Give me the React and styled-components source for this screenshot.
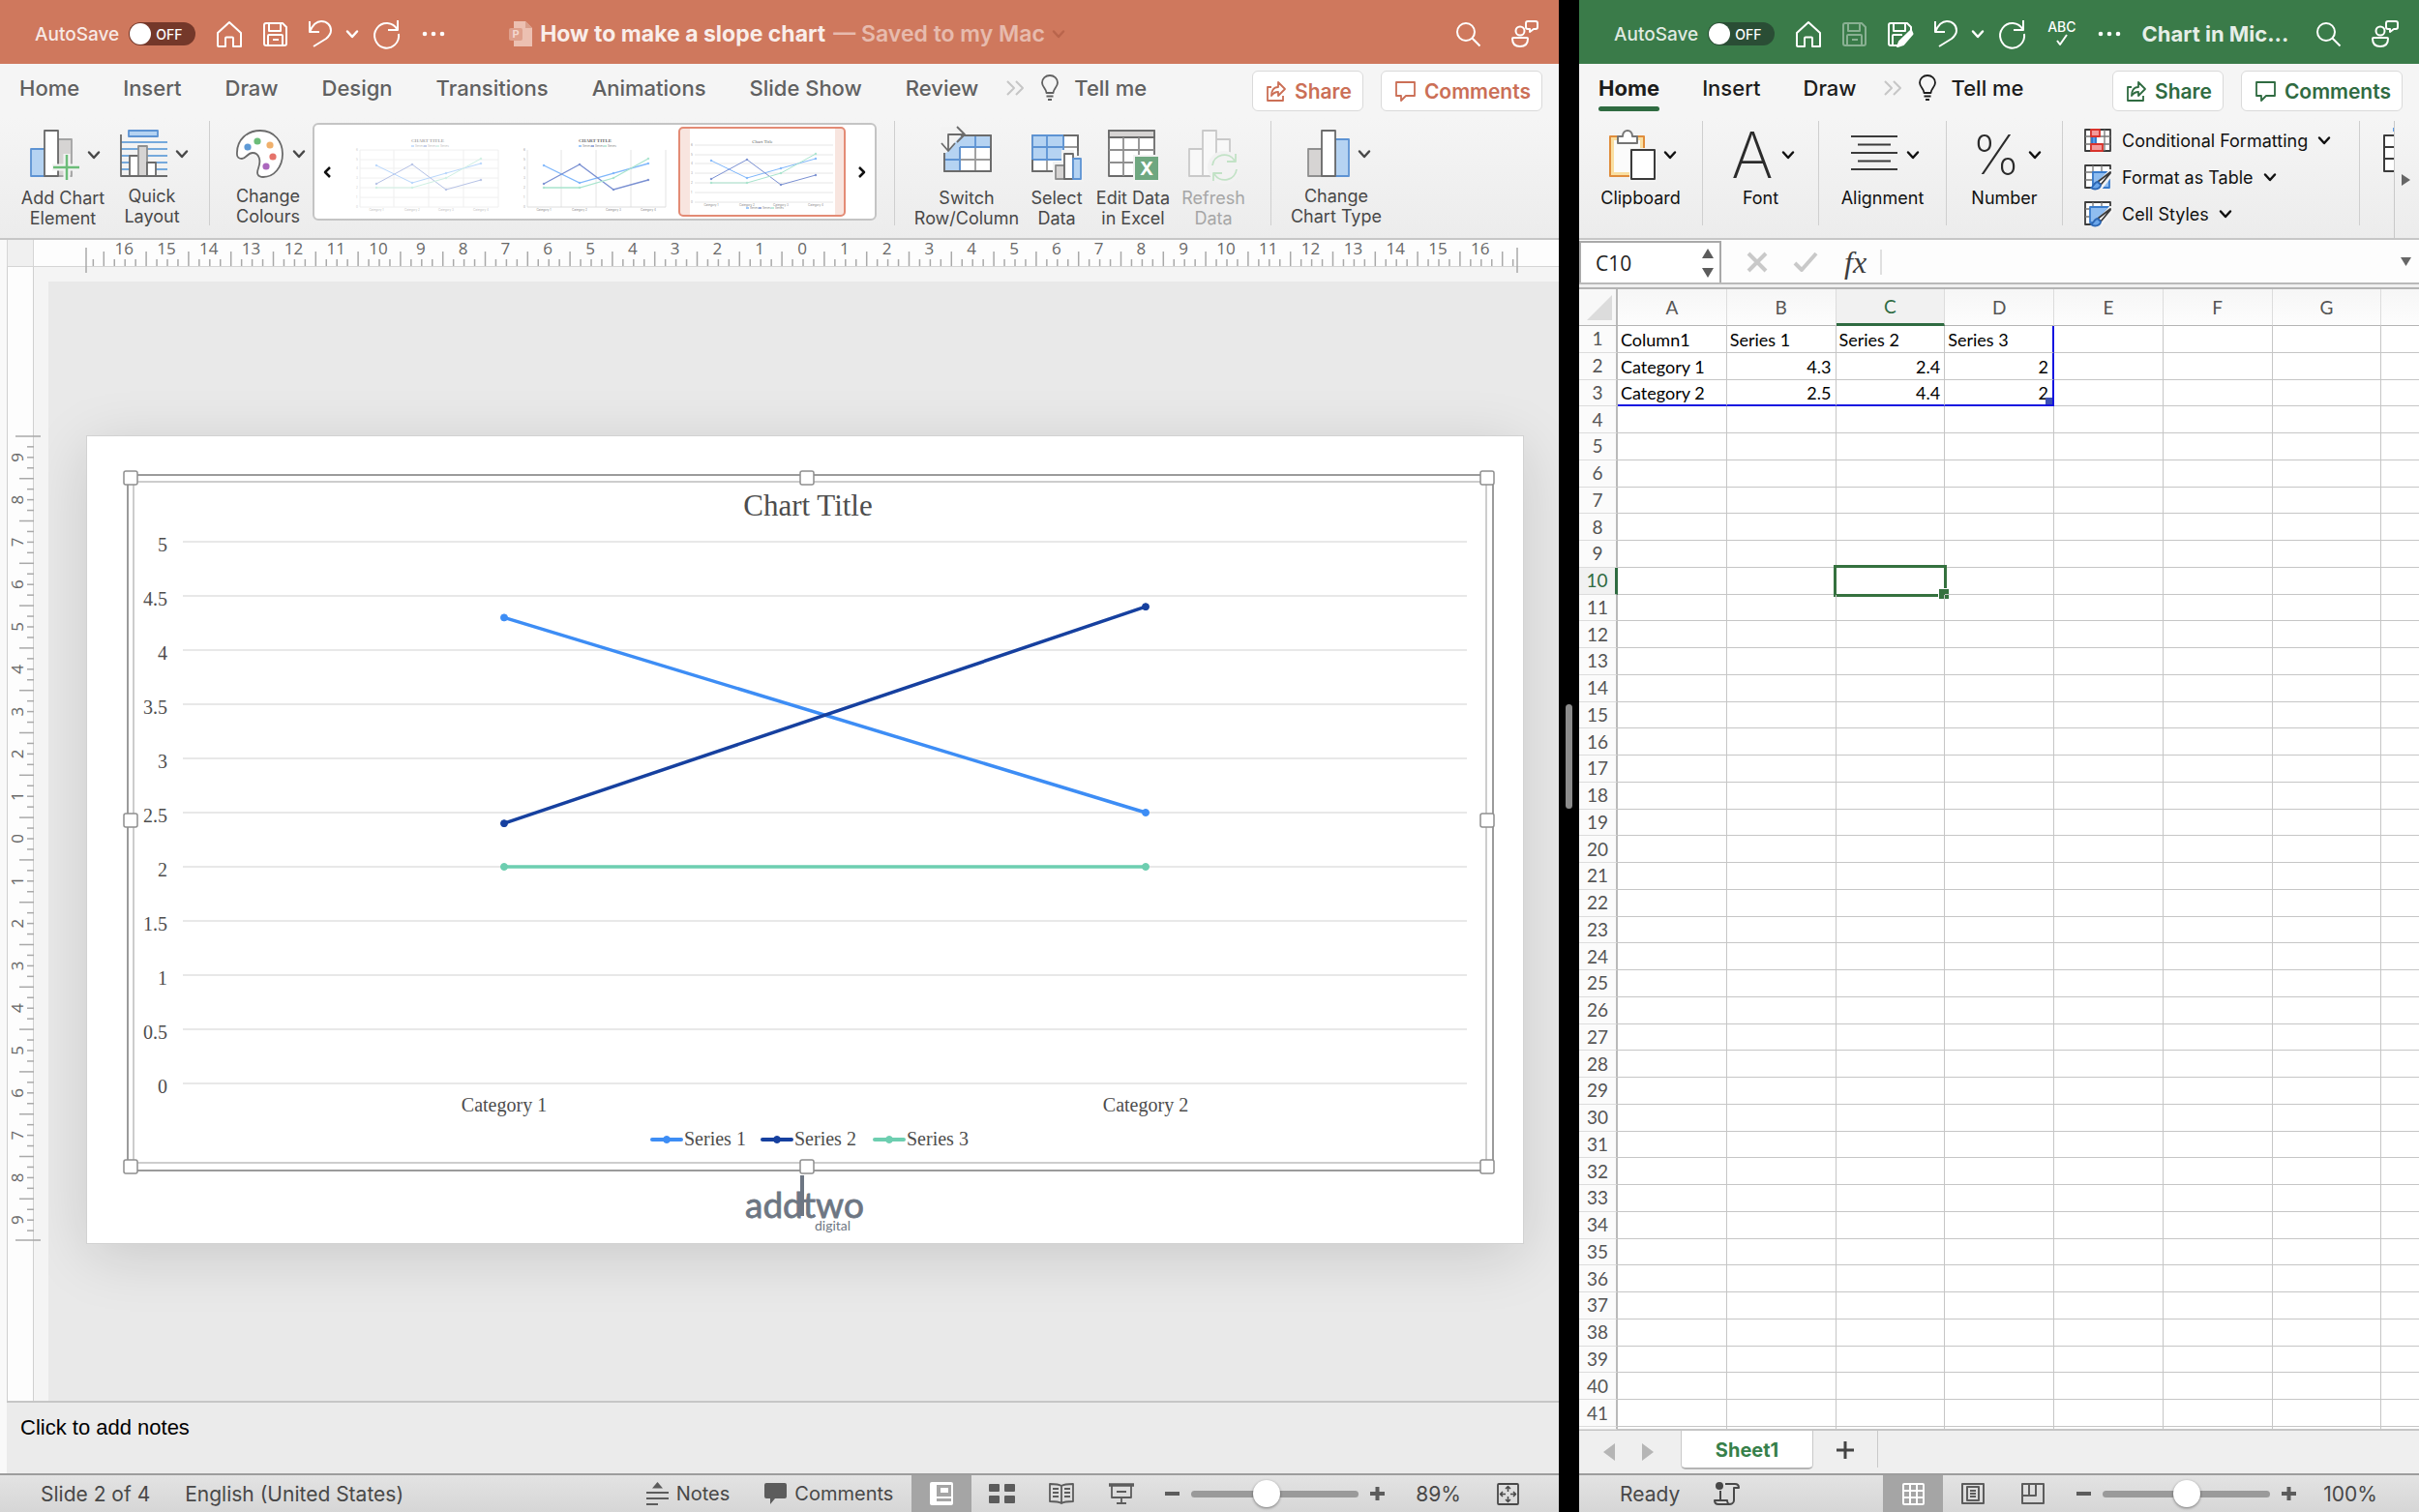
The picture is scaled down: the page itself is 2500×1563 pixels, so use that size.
import React from "react";
import styled, { createGlobalStyle, css } from "styled-components";

const GlobalStyle = createGlobalStyle`
  * {
    box-sizing: border-box;
  }
  body {
    margin: 0;
    font-family: Inter, "Liberation Sans", sans-serif;
    background: #000;
    overflow: hidden;
  }
  button, input, textarea {
    font-family: inherit;
    color: inherit;
    border: 0;
    margin: 0;
    padding: 0;
    background: none;
    outline: none;
  }
  svg {
    display: block;
    flex: none;
    overflow: visible;
  }
`;

const Desktop = styled.div`
  display: flex;
  height: 100vh;
  background: #000;
`;

const AppWindow = styled.section`
  flex: ${(p) => p.$grow} 1 0;
  min-width: 0;
  display: flex;
  flex-direction: column;
  background: #ebebeb;
  overflow: hidden;
`;

const Divider = styled.div`
  width: 21px;
  display: flex;
  align-items: center;
  justify-content: center;

  &::after {
    content: "";
    width: 7px;
    height: 108px;
    border-radius: 4px;
    background: #8b8b8b;
  }
`;

/* title bar */
const TitleBar = styled.header`
  height: 66px;
  flex: none;
  padding: 4px 21px 0 36px;
  display: grid;
  grid-template-columns: ${(p) => p.$columns};
  align-items: center;
  color: #fff;
  background: ${(p) => p.$color};
`;

const Tools = styled.div`
  display: flex;
  align-items: center;
  gap: ${(p) => p.$gap || 22}px;
  justify-content: ${(p) => (p.$end ? "flex-end" : "flex-start")};
`;

const ToolButton = styled.button`
  display: flex;
  align-items: center;
  color: #fff;
  opacity: ${(p) => (p.$dim ? 0.4 : 1)};
`;

const SpellButton = styled(ToolButton)`
  flex-direction: column;
  padding-bottom: 2px;
  font-size: 14px;
  font-weight: 500;
  line-height: 14px;
`;

const AutoSave = styled.label`
  display: flex;
  align-items: center;
  gap: 10px;
  font-size: 19px;
  font-weight: 500;
  color: rgba(255, 255, 255, 0.85);

  input {
    appearance: none;
    position: absolute;
  }
`;

const Switch = styled.span`
  width: 69px;
  height: 24px;
  border-radius: 12px;
  display: flex;
  align-items: center;
  gap: 5px;
  padding-left: 1px;
  font-size: 14px;
  font-weight: 500;
  color: #fff;
  background: ${(p) => p.$color};

  &::before {
    content: "";
    width: 22px;
    height: 22px;
    border-radius: 50%;
    background: #fff;
  }
`;

const DocTitle = styled.h1`
  margin: 0;
  display: flex;
  align-items: center;
  gap: 8px;
  font-size: ${(p) => p.$size}px;
  font-weight: 700;
  white-space: nowrap;
  color: rgba(255, 255, 255, 0.88);

  span {
    color: rgba(255, 255, 255, 0.5);
    font-weight: 600;
  }
`;

const TitleMenu = styled.button`
  color: #b9654c;
`;

/* ribbon */
const TabRow = styled.nav`
  height: 55px;
  flex: none;
  display: flex;
  align-items: flex-start;
  padding: 0 17px 0 20px;
  background: #f5f5f5;
`;

const Tabs = styled.div`
  display: flex;
  flex: 1;
  gap: ${(p) => p.$gap}px;
`;

const Tab = styled.button`
  position: relative;
  height: 49px;
  display: flex;
  align-items: center;
  gap: 16px;
  font-size: 22px;
  white-space: nowrap;
  color: ${(p) => p.$color};
  font-weight: ${(p) => (p.$active ? 700 : 500)};

  ${(p) =>
    p.$active &&
    css`
      &::after {
        content: "";
        position: absolute;
        left: 0;
        right: 0;
        bottom: 0;
        height: 5px;
        border-radius: 3px;
        background: #2f6b41;
      }
    `}
`;

const TabTail = styled.div`
  display: flex;
  align-items: center;
  gap: 16px;
  margin-left: -17px;
`;

const PillButton = styled.button`
  margin: 7px 0 0 18px;
  height: 42px;
  padding: 0 11px 0 14px;
  display: flex;
  align-items: center;
  gap: 9px;
  font-size: 21px;
  font-weight: 600;
  color: ${(p) => p.$color};
  background: #fff;
  border: 1px solid #dadada;
  border-radius: 6px;
`;

const Ribbon = styled.div`
  height: 127px;
  flex: none;
  display: flex;
  padding: 4px 0 0 ${(p) => p.$pad}px;
  background: linear-gradient(#f5f5f5, #ececec);
  border-bottom: 2px solid #c6c6c6;
`;

const Separator = styled.i`
  width: 1px;
  height: 108px;
  flex: none;
  margin: 0 ${(p) => p.$space || 0}px;
  background: #cfcfcf;
`;

const RibbonButton = styled.button`
  width: ${(p) => p.$width}px;
  flex: none;
  height: 108px;
  padding-top: 9px;
  display: flex;
  flex-direction: column;
  align-items: center;
  gap: 8px;
  font-size: 18px;
  line-height: 21px;
  color: ${(p) => p.$color || "#484848"};
`;

const IconLine = styled.span`
  height: 52px;
  display: flex;
  align-items: center;
  gap: 9px;
  padding-left: ${(p) => (p.$menu ? 4 : 0)}px;
`;

const ThinGlyph = styled.span`
  font-family: Inter, Lato, sans-serif;
  font-size: ${(p) => p.$size}px;
  font-weight: 200;
  line-height: 50px;
  color: #2b2b2b;
`;

const Gallery = styled.div`
  margin-left: 6px;
  width: 583px;
  height: 101px;
  flex: none;
  margin-top: 2px;
  display: flex;
  align-items: center;
  justify-content: space-between;
  padding: 0 9px;
  background: #fff;
  border: 2px solid #c4c4c4;
  border-radius: 6px;
  color: #111;
`;

const Thumbs = styled.div`
  display: flex;
`;

const Thumb = styled.button`
  width: 173px;
  height: 93px;
  display: flex;
  justify-content: center;
  border: 2px solid ${(p) => (p.$selected ? "#e38b75" : "transparent")};
  border-radius: 5px;
  background: ${(p) => (p.$selected ? "#f8e5df" : "#fff")};
`;

const FormatList = styled.div`
  flex: 1;
  padding-left: 22px;
  display: flex;
  flex-direction: column;
  gap: 12px;
  padding-top: 7px;
`;

const FormatButton = styled.button`
  display: flex;
  align-items: center;
  gap: 11px;
  height: 26px;
  font-size: 18px;
  white-space: nowrap;
  color: #111;
`;

const CutGroup = styled.div`
  width: 36px;
  padding: 8px 0 0 24px;
  overflow: hidden;
  border-right: 1px solid #c8c8c8;
`;

const RibbonScroll = styled.button`
  width: 25px;
  display: flex;
  align-items: center;
  justify-content: center;
  padding-right: 3px;
  color: #666;
`;

/* slide editor */
const Editor = styled.div`
  flex: 1;
  min-height: 0;
  display: grid;
  grid-template-columns: 28px 1fr;
  grid-template-rows: 28px 1fr 75px;
  border-left: 7px solid #f9f9f9;
  box-shadow: inset 1px 0 #c8c8c8;
`;

const RulerCorner = styled.div`
  background: #f0f0f0;
  border: 1px solid #d5d5d5;
  border-width: 0 1px 1px 1px;
`;

const HorizontalRuler = styled.div`
  background: #fdfdfd;
  border-bottom: 1px solid #d5d5d5;
  overflow: visible;
  position: relative;
  z-index: 1;
`;

const VerticalRuler = styled.div`
  background: #fdfdfd;
  border: 1px solid #d0d0d0;
  border-width: 0 1px;
  position: relative;
  z-index: 1;
`;

const Stage = styled.main`
  display: flex;
  align-items: center;
  padding: 0 37px 3px 40px;
  border: 15px solid #f4f4f4;
  border-width: 15px 0 0 15px;
  background: #e9e9e9;
  overflow: hidden;
  min-height: 0;
`;

const Slide = styled.div`
  width: 100%;
  background: #fff;
  outline: 1px solid #d2d2d2;
  box-shadow: 0 12px 60px rgba(0, 0, 0, 0.14);
`;

const NotesBox = styled.textarea`
  grid-column: 1 / -1;
  height: 100%;
  width: 100%;
  resize: none;
  padding: 13px 14px;
  font-family: "Liberation Sans", Arial, sans-serif;
  font-size: 22px;
  line-height: 26px;
  background: #ebebeb;
  border-top: 2px solid #c6c6c6;

  &::placeholder {
    color: #000;
  }
`;

/* status bars */
const StatusBar = styled.footer`
  height: 40px;
  flex: none;
  display: flex;
  align-items: center;
  padding: 0 ${(p) => p.$right}px 0 42px;
  font-size: 21px;
  color: #484848;
  background: linear-gradient(#e3e3e3, #d6d6d6);
  border-top: 2px solid #9d9d9d;
`;

const StatusText = styled.span`
  margin-right: ${(p) => p.$space || 0}px;
  white-space: nowrap;
`;

const StatusButton = styled.button`
  display: flex;
  align-items: center;
  gap: 8px;
  font-size: 20px;
  margin-right: ${(p) => p.$space || 0}px;
`;

const Spacer = styled.div`
  flex: 1;
`;

const ViewButton = styled.button`
  width: 62px;
  height: 38px;
  flex: none;
  display: flex;
  align-items: center;
  justify-content: center;
  color: ${(p) => (p.$active ? "#fff" : "#5c5c5c")};
  background: ${(p) => (p.$active ? "#a5a5a5" : "none")};
`;

const ZoomControl = styled.div`
  display: flex;
  align-items: center;
  gap: 12px;
  margin: 0 ${(p) => p.$after}px 0 14px;
`;

const ZoomSlider = styled.input`
  appearance: none;
  width: 173px;
  height: 28px;

  &::-webkit-slider-runnable-track {
    height: 7px;
    border-radius: 4px;
    background: #9a9a9a;
  }
  &::-webkit-slider-thumb {
    appearance: none;
    width: 28px;
    height: 28px;
    margin-top: -11px;
    border-radius: 50%;
    background: #fff;
    box-shadow: 0 1px 3px rgba(0, 0, 0, 0.45);
  }
`;

/* spreadsheet */
const FormulaBar = styled.div`
  height: 51px;
  flex: none;
  display: flex;
  align-items: center;
  padding-bottom: 4px;
  background: #fdfdfd;
  border-bottom: 2px solid #b4b4b4;
  box-shadow: inset 0 -3px #f0f0f0, inset 0 -5px #b9b9b9;
`;

const NameBox = styled.div`
  width: 147px;
  height: 43px;
  display: flex;
  align-items: center;
  border: 2px solid #a9a9a9;
  border-bottom: 0;
  padding: 0 6px 0 15px;
  background: #fff;

  input {
    flex: 1;
    min-width: 0;
    font-family: "Open Sans", sans-serif;
    font-size: 21px;
    color: #222;
  }
`;

const Stepper = styled.div`
  display: flex;
  flex-direction: column;
  gap: 10px;
  color: #5c5c5c;

  button {
    display: block;
  }
`;

const FormulaTools = styled.div`
  display: flex;
  align-items: center;
  gap: 28px;
  margin-left: 27px;
  padding-right: 14px;
  border-right: 2px solid #e0e0e0;
  color: #c9c9c9;
`;

const FunctionButton = styled.button`
  font-family: "Liberation Serif", serif;
  font-size: 32px;
  line-height: 26px;
  font-style: italic;
  color: #3d3d3d;
`;

const FormulaInput = styled.input`
  flex: 1;
  min-width: 0;
  height: 34px;
`;

const SheetArea = styled.div`
  flex: 1;
  min-height: 0;
  background: #fff;
  overflow: hidden;
`;

const Sheet = styled.table`
  width: 942px;
  height: 100%;
  table-layout: fixed;
  border-collapse: separate;
  border-spacing: 0;
  font-family: Lato, "Open Sans", sans-serif;
  font-size: 18px;
`;

const Row = styled.tr`
  ${(p) => p.$height && `height: ${p.$height}px;`}
`;

const ColumnHead = styled.th`
  padding: 0;
  font-size: 19px;
  font-weight: 400;
  line-height: 20px;
  color: ${(p) => (p.$active ? "#2f6b41" : "#555")};
  background: ${(p) => (p.$active ? "#f1f1f1" : "linear-gradient(#f6f6f6, #fdfdfd)")};
  border-right: 1px solid #dcdcdc;
  border-bottom: ${(p) => (p.$active ? "3px solid #2f6b41" : "1px solid #b5b5b5")};
`;

const CornerHead = styled.th`
  width: 40px;
  padding: 4px 3px 3px 8px;
  background: #f8f8f8;
  border-right: 2px solid #b9b9b9;
  border-bottom: 1px solid #b5b5b5;
`;

const RowHead = styled.th`
  padding: 0;
  font-size: 19px;
  font-weight: 400;
  line-height: 20px;
  color: ${(p) => (p.$active ? "#2f6b41" : "#555")};
  background: ${(p) => (p.$active ? "#f1f1f1" : "#fbfbfb")};
  border-right: ${(p) => (p.$active ? "3px solid #2f6b41" : "2px solid #b9b9b9")};
  border-bottom: 1px solid #dcdcdc;
`;

/* cells stay shorter than the row head, so every row gets the same height */
const Cell = styled.td`
  position: relative;
  padding: 1px 4px 0 3px;
  line-height: 18px;
  white-space: nowrap;
  color: #000;
  text-align: ${(p) => (p.$number ? "right" : "left")};
  border-right: ${(p) => (p.$blueRight ? "2px solid #1515e0" : "1px solid #c6c6c6")};
  border-bottom: ${(p) => (p.$blueBottom ? "2px solid #1515e0" : "1px solid #c6c6c6")};
`;

const RangeHandle = styled.i`
  position: absolute;
  right: 0;
  bottom: 0;
  width: 7px;
  height: 7px;
  background: #3b4fb5;
`;

const Selection = styled.div`
  position: absolute;
  inset: -3px;
  border: 3px solid #35713f;

  &::after {
    content: "";
    position: absolute;
    right: -6px;
    bottom: -6px;
    width: 10px;
    height: 10px;
    background: #35713f;
    border: 1px solid #fff;
  }
`;

const SheetTabs = styled.div`
  height: 45px;
  flex: none;
  display: flex;
  align-items: flex-start;
  background: #efefef;
  border-top: 1px solid #c4c4c4;
  color: #b5b5b5;
  padding-left: 25px;
`;

const SheetNav = styled.button`
  height: 44px;
  width: 40px;
`;

const SheetTab = styled.button`
  width: 137px;
  height: 40px;
  padding-top: 2px;
  font-size: 20px;
  font-weight: 700;
  color: #36804a;
  background: #fff;
  border: 1px solid #c9c9c9;
  border-top: 0;
  border-bottom: 2px solid #b5b5b5;
  border-radius: 0 0 5px 5px;
`;

const AddSheet = styled.button`
  width: 67px;
  height: 38px;
  display: flex;
  align-items: center;
  justify-content: center;
  padding: 2px 0 0 0;
  color: #444;
  border-right: 1px solid #c9c9c9;
`;

/* icons */
const Icon = ({ w, h, children, stroke = "currentColor", sw = 2, fill = "none" }) => (
  <svg
    width={w}
    height={h}
    viewBox={`0 0 ${w} ${h}`}
    fill={fill}
    stroke={stroke}
    strokeWidth={sw}
    strokeLinejoin="round"
    aria-hidden="true"
  >
    {children}
  </svg>
);

const Chevron = () => (
  <Icon w={12} h={9} sw={2.5}>
    <path d="M1 1.5 6 7l5-5.5" strokeLinecap="round" />
  </Icon>
);

const HomeIcon = () => (
  <Icon w={26} h={27}>
    <path d="M1 12 13 1l12 11v14h-8V17.500q0-1-1-1h-6q-1 0-1 1V26H2q-1 0-1-1z" />
  </Icon>
);

const SaveIcon = () => (
  <Icon w={25} h={25}>
    <path d="M3 1h17l4 4v17q0 2-2 2H3q-2 0-2-2V3q0-2 2-2z" />
    <path d="M6 1v8h12V1M5 24V14q0-1 1-1h13q1 0 1 1v10M10 18h6" />
  </Icon>
);

const SaveEditIcon = () => (
  <Icon w={26} h={25}>
    <path d="M10 24H3q-2 0-2-2V3q0-2 2-2h17l4 4v3" />
    <path d="M6 1v8h12V1M5 24V14q0-1 1-1h9" />
    <path d="M24 8.500 12 20l-2 5 6-2 9.500-11z" fill="#fff" />
  </Icon>
);

const UndoIcon = () => (
  <Icon w={24} h={28}>
    <path d="M1 1v11h10M1 12C4 5 8 1 13 1c6 0 10 4 10 9.500 0 4-2 6-5 8.500L5 27" />
  </Icon>
);

const RedoIcon = () => (
  <Icon w={29} h={28}>
    <path d="M26 0v10H16M25.500 9.500A12.500 12.800 0 1 0 27 14" />
  </Icon>
);

const MoreIcon = () => (
  <Icon w={24} h={6} fill="currentColor" stroke="none">
    <circle cx="3" cy="3" r="2.300" />
    <circle cx="12" cy="3" r="2.300" />
    <circle cx="21" cy="3" r="2.300" />
  </Icon>
);

const SearchIcon = () => (
  <Icon w={25} h={25}>
    <circle cx="10" cy="10" r="9" />
    <path d="m16.500 16.500 8 8" />
  </Icon>
);

const PersonIcon = () => (
  <Icon w={28} h={28}>
    <circle cx="9" cy="11" r="4.500" />
    <path d="M2 18h14q1 0 1 1c0 5-3 8-8 8s-8-3-8-8q0-1 1-1z" />
    <path d="M17 1h8q2 0 2 2v4q0 2-2 2h-2l-4 3V9h-2q-2 0-2-2V3q0-2 2-2z" />
  </Icon>
);

const DocIcon = () => (
  <Icon w={24} h={26} stroke="none">
    <path d="M5 0h12l7 7v19H5z" fill="#ecc0b1" />
    <path d="M17 0v7h7z" fill="#d99f8b" />
    <rect y="7" width="14" height="13" rx="2" fill="#dfa08c" />
    <text x="7" y="17" fontSize="11" fontWeight="700" textAnchor="middle" fill="#f3d8ce">
      P
    </text>
  </Icon>
);

const CheckMark = () => (
  <Icon w={14} h={13}>
    <path d="m2 7 3 4 7-10" />
  </Icon>
);

const BulbIcon = () => (
  <Icon w={18} h={27} sw={1.800}>
    <path d="M5.500 19C5.500 15 1 13 1 8.500a8 7.500 0 0 1 16 0C17 13 12.500 15 12.500 19zM5.500 22.500h7M7 26h4" />
  </Icon>
);

const OverflowIcon = () => (
  <Icon w={21} h={16} stroke="#c6c6c6">
    <path d="m2 1 7 7-7 7M11 1l7 7-7 7" />
  </Icon>
);

const ShareIcon = () => (
  <Icon w={20} h={22} sw={1.800}>
    <path d="M5 7H1v14h16v-5" />
    <path d="M12 2v5c-5 0-7 4-7 9 2-3 4-4 7-4v4l7-7z" />
  </Icon>
);

const CommentIcon = () => (
  <Icon w={21} h={21} sw={1.800}>
    <path d="M1 1h19v14h-9l-5 5v-5H1z" />
  </Icon>
);

const AddElementIcon = () => (
  <Icon w={51} h={52} stroke="#6b6b6b" sw={1.800}>
    <rect x="29" y="10" width="14" height="38" fill="#d6d4d3" stroke="#a3a3a3" />
    <rect x="1" y="20" width="14" height="28" fill="#b5d3f2" stroke="#5d93d3" />
    <rect x="15" y="1" width="14" height="47" fill="#fff" />
    <path d="M38 25v27M23 39h28" stroke="#f3f3f3" strokeWidth="7" />
    <path d="M38 26v26M24 39h27" stroke="#6cbd79" strokeWidth="2.500" />
  </Icon>
);

const LayoutIcon = () => (
  <Icon w={49} h={50} stroke="#6b6b6b" sw={1.800}>
    <rect x="9" y="1" width="30" height="6" fill="#b5d3f2" stroke="#5d93d3" />
    <path d="M1 13h48M1 20h48M1 27h48M1 34h48M1 41h48" stroke="#75a9dc" />
    <rect x="10" y="27" width="9" height="21" fill="#fff" />
    <rect x="19" y="17" width="9" height="31" fill="#d6d4d3" stroke="#8f8f8f" />
    <rect x="28" y="34" width="9" height="14" fill="#fff" />
    <path d="M1 5v43h48" />
  </Icon>
);

const PaletteIcon = () => (
  <Icon w={50} h={50} stroke="none">
    <path
      d="M1 26C0 10 12 1 25 1c15 0 23 12 23 24 0 14-9 24-20 24-6 0-7-4-5-9 3-8 1-16-6-16-5 0-7 6-11 6-3 0-5-2-5-4z"
      fill="#fff"
      stroke="#6b6b6b"
      strokeWidth="1.800"
    />
    <circle cx="12" cy="18" r="3.600" fill="#5e9ad6" />
    <circle cx="22" cy="12" r="3.600" fill="#6cbd79" />
    <circle cx="35" cy="16" r="3.600" fill="#f0b06c" />
    <circle cx="38" cy="28" r="3.600" fill="#e5736b" />
    <circle cx="31" cy="38" r="3.600" fill="#ab67bd" />
  </Icon>
);

const SwitchIcon = () => (
  <Icon w={52} h={52} stroke="#6b6b6b" sw={1.800}>
    <rect x="3" y="6" width="48" height="37" fill="#fff" />
    <path d="M3 6h48v12H19v25H3z" fill="#b5d3f2" stroke="none" />
    <path d="M19 18v25M35 18v25M19 31h32" stroke="#9a9a9a" />
    <path d="M35 6v12M3 31h16M19 18v25M19 18h32" stroke="#5d93d3" />
    <path d="M3 6h48v37H3z" />
    <path d="M-1-3h29L5 24H-1z" fill="#f3f3f3" stroke="none" />
    <path d="M7 21V5h16M0 14l7 8 7-8M16-3l8 8-8 8" />
  </Icon>
);

const SelectIcon = () => (
  <Icon w={52} h={52} stroke="#6b6b6b" sw={1.800}>
    <rect x="1" y="6" width="47" height="37" fill="#fff" />
    <path d="M1 31h47M1 18h47M16 6v37M33 6v37" stroke="#9a9a9a" />
    <rect x="1" y="6" width="32" height="25" fill="#b5d3f2" stroke="#5d93d3" />
    <path d="M1 18h32M16 6v25" stroke="#5d93d3" />
    <path d="M33 6h15v16M1 31v12h22" />
    <path d="M22 33h9V21h13v6h10v27H22z" fill="#f2f2f2" stroke="none" />
    <rect x="25" y="37" width="9" height="14" fill="#d6d4d3" stroke="#8f8f8f" />
    <rect x="34" y="25" width="9" height="26" fill="#fff" />
    <rect x="43" y="30" width="8" height="21" fill="#b5d3f2" stroke="#5d93d3" />
  </Icon>
);

const EditDataIcon = () => (
  <Icon w={52} h={52} stroke="#6b6b6b" sw={1.800}>
    <rect x="1" y="1" width="47" height="47" fill="#fff" />
    <rect x="1" y="1" width="47" height="7" fill="#d6d4d3" />
    <path d="M16 8v40M32 8v40M1 21h47M1 34h47" stroke="#8f8f8f" />
    <path d="M26 26h28v28H26z" fill="#f2f2f2" stroke="none" />
    <rect x="28" y="28" width="24" height="24" fill="#6fa780" stroke="none" />
    <text x="40" y="47" fontSize="19" fontWeight="700" textAnchor="middle" fill="#fff" stroke="none">
      X
    </text>
  </Icon>
);

const RefreshIcon = () => (
  <Icon w={52} h={52} stroke="#c9c9c9" sw={1.800}>
    <path d="M1 20h14v28H1zM15 1h14v47H15zM29 10h14v38H29z" fill="#f8f8f8" />
    <circle cx="37" cy="39" r="17" fill="#f2f2f2" stroke="none" />
    <path d="M25 37a12.500 12.500 0 0 1 23-5M49 25v8h-9M50 41a12.500 12.500 0 0 1-23 5M26 53v-8h9" stroke="#c2e2c6" />
  </Icon>
);

const ChartTypeIcon = () => (
  <Icon w={44} h={50} stroke="#6b6b6b" sw={1.800}>
    <rect x="1" y="20" width="14" height="28" fill="#d6d4d3" stroke="#8f8f8f" />
    <rect x="29" y="10" width="14" height="38" fill="#b5d3f2" stroke="#5d93d3" />
    <rect x="15" y="1" width="14" height="47" fill="#fff" />
  </Icon>
);

const ClipboardIcon = () => (
  <Icon w={48} h={52} stroke="#3b3b3b">
    <rect x="1" y="7" width="35" height="41" fill="#f9dfa2" stroke="#e08d3c" />
    <rect x="5" y="11" width="27" height="33" fill="#fbfbfb" stroke="none" />
    <path d="M9 14V7h5c0-8 10-8 10 0h5v7z" fill="#fff" stroke="#757575" />
    <path d="M21 19h28v35H21z" fill="#f3f3f3" stroke="none" />
    <rect x="23" y="21" width="24" height="30" fill="#fff" />
  </Icon>
);

const AlignIcon = () => (
  <Icon w={50} h={40} stroke="#3b3b3b">
    <path d="M1 1h48M8 9.500h34M1 18h48M8 26.500h34M1 35h48" />
  </Icon>
);

const ConditionalIcon = () => (
  <Icon w={28} h={24} stroke="#3b3b3b" sw={1.800}>
    <path d="M1 1h26v22H1z" fill="#fff" />
    <path d="M7 1v22M21 1v22M1 8h26M1 16h26" stroke="#777" strokeWidth="1.300" />
    <path d="M8 8h4v8H8z" fill="#5b9ce8" stroke="#2f75c9" />
    <path d="M7 1h9v7H7zM7 16h12v7H7z" fill="#f39a9a" stroke="#d9332c" />
  </Icon>
);

const TableStyleIcon = ({ full }) => (
  <Icon w={28} h={26} stroke="#3b3b3b" sw={1.800}>
    <path d="M27 8V1H1v23h6" fill="#fff" />
    <path d="M9 1v22M18 1v8M1 8h26M1 16h10" stroke="#777" strokeWidth="1.300" />
    <path d={full ? "M6 6h20L12 22H6z" : "M9 8h17v16H9z"} fill="#8fbdf0" stroke="#3a7ccc" />
    <path d="M27 7 14 21l3 3 11-14z" fill="#fff" stroke="#f2f2f2" strokeWidth="4" />
    <path d="M27 8 14 18l3 3 10-12z" fill="#fff" />
    <path d="M14 18c-4 0-4 5-7 6 4 3 10 1 10-3z" fill="#6ba6ea" stroke="#2d68b5" />
  </Icon>
);

const CutTableIcon = () => (
  <Icon w={30} h={50} stroke="#3b3b3b">
    <path d="M1 7h36v37H1zM1 19h36M1 31h36" fill="#fff" />
    <path d="M11-1v4" stroke="#5b9ce8" />
  </Icon>
);

const Triangle = ({ d, w = 12, h = 10 }) => (
  <Icon w={w} h={h} stroke="none" fill="currentColor">
    <path d={d} />
  </Icon>
);

const MinusPlus = ({ plus }) => (
  <Icon w={15} h={14} sw={4} stroke="#5c5c5c">
    <path d={plus ? "M0 7h15M7.500 0v14" : "M0 7h15"} />
  </Icon>
);

/* gallery thumbnails */
const thumbX = [22, 59, 94, 130];
const thumbSeries = [
  { color: "#7fb7fb", y: [33, 51, 41, 31] },
  { color: "#7a90d2", y: [52, 32, 58, 48] },
  { color: "#a8e4cd", y: [56, 56, 46, 26] },
];

const ThumbChart = ({ variant }) => {
  const shift = variant === 2 ? 0 : 5;
  return (
    <svg width="150" height="89" viewBox="0 0 150 89" opacity={variant === 0 ? 0.55 : 1}>
      <rect width="150" height="89" fill="#fff" />
      {[17, 27, 36, 46, 56, 66, 76].map((y, i) => (
        <g key={y}>
          {variant !== 1 && <path d={`M5 ${y + shift}h143`} stroke="#e6e6e6" strokeWidth="1" />}
          <text x="1" y={y + shift + 1} fontSize="3" fill="#999">
            {6 - i}
          </text>
        </g>
      ))}
      {variant !== 2 &&
        [5, 40, 76, 112, 148].map((x) => (
          <path key={x} d={`M${x} 22v59`} stroke="#e4e4e4" strokeWidth="1" />
        ))}
      {variant === 1 && <path d="M5 81h143" stroke="#ddd" strokeWidth="1" />}
      <text
        x="75"
        y={variant === 2 ? 15 : 14}
        fontSize="5"
        textAnchor="middle"
        fill="#666"
        fontFamily="Liberation Serif, serif"
        fontWeight={variant === 2 ? 400 : 700}
      >
        {variant === 2 ? "Chart Title" : "CHART TITLE"}
      </text>
      {thumbSeries.map((s, i) => (
        <g key={s.color} stroke={s.color} fill={s.color}>
          <polyline
            points={s.y.map((y, n) => `${thumbX[n]},${y + shift}`).join(" ")}
            fill="none"
            strokeWidth={variant === 1 ? 1.3 : 1}
          />
          {s.y.map((y, n) => (
            <circle key={n} cx={thumbX[n]} cy={y + shift} r="0.800" />
          ))}
          <path d={`M${58 + i * 13} ${variant === 2 ? 82 : 18}h3`} strokeWidth="1.500" />
          <text
            x={62 + i * 13}
            y={variant === 2 ? 83 : 19}
            fontSize="3"
            fill="#888"
            stroke="none"
          >
            Series
          </text>
        </g>
      ))}
      {thumbX.map((x, i) => (
        <text key={x} x={x} y={shift + 80} fontSize="3" textAnchor="middle" fill="#888">
          Category {i + 1}
        </text>
      ))}
    </svg>
  );
};

/* rulers, one unit is 43.8px */
const UNIT = 43.8;

const RulerMarks = ({ half, start, end, center, vertical }) => {
  const line = (pos, from, to, key) =>
    vertical ? (
      <path key={key} d={`M${from} ${pos}H${to}`} />
    ) : (
      <path key={key} d={`M${pos} ${from}V${to}`} />
    );
  const ticks = [];
  for (let i = -half * 4 - 3; i <= half * 4 + 3; i++) {
    const pos = center + (i * UNIT) / 4;
    const major = Math.abs(i) % 4 === 2;
    if (pos > start + 3 && pos < end - 3) ticks.push(line(pos, major ? 12 : 20, 27, i));
  }
  const labels = [];
  for (let i = -half; i <= half; i++) labels.push(i);
  return (
    <g>
      <g stroke="#a9a9a9" strokeWidth="1.500">
        {ticks}
        {line(start, 8, 34, "start")}
        {line(end, 8, 34, "end")}
      </g>
      <g fontSize="17" fill="#686868" textAnchor="middle" fontFamily="Open Sans, sans-serif">
        {labels.map((n) => {
          const pos = center + n * UNIT;
          return vertical ? (
            <text key={n} transform={`translate(16 ${pos}) rotate(-90)`}>
              {Math.abs(n)}
            </text>
          ) : (
            <text key={n} x={pos - 1} y="15">
              {Math.abs(n)}
            </text>
          );
        })}
      </g>
    </g>
  );
};

/* slope chart */
const X1 = 431;
const X2 = 1094;
const yOf = (v) => 669 - v * 112;

const series = [
  { name: "Series 1", color: "#3d8df5", values: [4.3, 2.5], legend: 583 },
  { name: "Series 2", color: "#16409f", values: [2.4, 4.4], legend: 697 },
  { name: "Series 3", color: "#6dceb0", values: [2, 2], legend: 813 },
];
const axis = [5, 4.5, 4, 3.5, 3, 2.5, 2, 1.5, 1, 0.5, 0];

const SlopeChart = () => (
  <svg
    width="100%"
    viewBox="0 0 1484 834"
    fontFamily="Georgia, Liberation Serif, serif"
    fontSize="20"
    fill="#4d4d4d"
    role="img"
    aria-label="Chart Title"
  >
    <rect x="42" y="40" width="1411" height="719" fill="none" stroke="#9b9b9b" strokeWidth="2" />
    <rect x="48" y="47" width="1398" height="704" fill="none" stroke="#bdbdbd" strokeWidth="1.500" />
    <text x="745" y="82" fontSize="31" textAnchor="middle">
      Chart Title
    </text>
    {axis.map((v) => (
      <g key={v}>
        <path d={`M99 ${yOf(v)}H1426`} stroke="#e0e0e0" strokeWidth="1.500" />
        <text x="83" y={yOf(v) + 10} textAnchor="end">
          {v}
        </text>
      </g>
    ))}
    <text x={X1} y="698" textAnchor="middle">
      Category 1
    </text>
    <text x={X2} y="698" textAnchor="middle">
      Category 2
    </text>
    {series.map((s) => (
      <g key={s.name}>
        <g stroke={s.color} fill={s.color}>
          <path
            d={`M${X1} ${yOf(s.values[0])}L${X2} ${yOf(s.values[1])}`}
            strokeWidth="3.500"
          />
          <circle cx={X1} cy={yOf(s.values[0])} r="3.500" />
          <circle cx={X2} cy={yOf(s.values[1])} r="3.500" />
          <path d={`M${s.legend + 1} 727h30`} strokeWidth="4" strokeLinecap="round" />
          <circle cx={s.legend + 16} cy="727" r="3.500" />
        </g>
        <text x={s.legend + 34} y="733">
          {s.name}
        </text>
      </g>
    ))}
    <g fill="#6d7683" fontFamily="Lato, sans-serif">
      <text x="680" y="808" fontSize="37" stroke="#6d7683" strokeWidth="0.800">
        addtwo
      </text>
      <rect x="737" y="764" width="4" height="42" />
      <text x="752" y="821" fontSize="14">
        digital
      </text>
    </g>
    {[45, 744, 1447].map((x) =>
      [43, 397, 755].map((y) =>
        x === 744 && y === 397 ? null : (
          <rect
            key={`${x}-${y}`}
            x={x - 7}
            y={y - 7}
            width="14"
            height="14"
            rx="2"
            fill="#fff"
            stroke="#8f8f8f"
            strokeWidth="1.500"
          />
        )
      )
    )}
  </svg>
);

const RibbonItem = ({ icon, label, width, menu, color }) => (
  <RibbonButton $width={width} $color={color}>
    <IconLine $menu={menu}>
      {icon}
      {menu && <Chevron />}
    </IconLine>
    <span>
      {label.map((part, i) => (
        <React.Fragment key={part}>
          {i > 0 && <br />}
          {part}
        </React.Fragment>
      ))}
    </span>
  </RibbonButton>
);

const AutoSaveToggle = ({ color }) => (
  <AutoSave>
    AutoSave
    <input type="checkbox" />
    <Switch $color={color}>OFF</Switch>
  </AutoSave>
);

const UndoGroup = () => (
  <Tools $gap={15}>
    <ToolButton aria-label="Undo">
      <UndoIcon />
    </ToolButton>
    <ToolButton aria-label="Undo history">
      <Chevron />
    </ToolButton>
    <ToolButton aria-label="Redo">
      <RedoIcon />
    </ToolButton>
  </Tools>
);

const TitleEnd = () => (
  <Tools $gap={32} $end>
    <ToolButton aria-label="Search">
      <SearchIcon />
    </ToolButton>
    <ToolButton aria-label="Account">
      <PersonIcon />
    </ToolButton>
  </Tools>
);

const ShareButtons = ({ color }) => (
  <>
    <PillButton $color={color}>
      <ShareIcon />
      Share
    </PillButton>
    <PillButton $color={color}>
      <CommentIcon />
      Comments
    </PillButton>
  </>
);

const Zoom = ({ value, label, after, space }) => (
  <>
    <ZoomControl $after={after}>
      <button aria-label="Zoom out">
        <MinusPlus />
      </button>
      <ZoomSlider type="range" min="0" max="100" defaultValue={value} aria-label="Zoom" />
      <button aria-label="Zoom in">
        <MinusPlus plus />
      </button>
    </ZoomControl>
    <StatusText $space={space}>{label}</StatusText>
  </>
);

const slideTabs = [
  "Home",
  "Insert",
  "Draw",
  "Design",
  "Transitions",
  "Animations",
  "Slide Show",
  "Review",
];

const Slides = () => (
  <AppWindow $grow={1611}>
    <TitleBar $color="#cf785d" $columns="1fr auto 1fr">
      <Tools>
        <AutoSaveToggle color="#74382a" />
        <ToolButton aria-label="Home">
          <HomeIcon />
        </ToolButton>
        <ToolButton aria-label="Save">
          <SaveIcon />
        </ToolButton>
        <UndoGroup />
        <ToolButton aria-label="More">
          <MoreIcon />
        </ToolButton>
      </Tools>
      <DocTitle $size={23}>
        <DocIcon />
        How to make a slope chart
        <span>— Saved to my Mac</span>
        <TitleMenu aria-label="Document menu">
          <Chevron />
        </TitleMenu>
      </DocTitle>
      <TitleEnd />
    </TitleBar>
    <TabRow>
      <Tabs $gap={45}>
        {slideTabs.map((t) => (
          <Tab key={t} $color="#606060">
            {t}
          </Tab>
        ))}
        <TabTail>
          <OverflowIcon />
          <Tab $color="#606060">
            <BulbIcon />
            Tell me
          </Tab>
        </TabTail>
      </Tabs>
      <ShareButtons color="#cb6f56" />
    </TabRow>
    <Ribbon $pad={12}>
      <RibbonItem width={106} menu icon={<AddElementIcon />} label={["Add Chart", "Element"]} />
      <RibbonItem width={78} menu icon={<LayoutIcon />} label={["Quick", "Layout"]} />
      <Separator $space={20} />
      <RibbonItem width={80} menu icon={<PaletteIcon />} label={["Change", "Colours"]} />
      <Gallery>
        <button aria-label="Previous styles">
          <Icon w={9} h={12} sw={2.500}>
            <path d="M7 1 2 6l5 5" />
          </Icon>
        </button>
        <Thumbs>
          {[0, 1, 2].map((v) => (
            <Thumb key={v} $selected={v === 2} aria-label={`Chart style ${v + 1}`}>
              <ThumbChart variant={v} />
            </Thumb>
          ))}
        </Thumbs>
        <button aria-label="Next styles">
          <Icon w={9} h={12} sw={2.500}>
            <path d="m2 1 5 5-5 5" />
          </Icon>
        </button>
      </Gallery>
      <Separator $space={18} />
      <RibbonItem width={112} icon={<SwitchIcon />} label={["Switch", "Row/Column"]} />
      <RibbonItem width={74} icon={<SelectIcon />} label={["Select", "Data"]} />
      <RibbonItem width={84} icon={<EditDataIcon />} label={["Edit Data", "in Excel"]} />
      <RibbonItem width={82} color="#a6a6a6" icon={<RefreshIcon />} label={["Refresh", "Data"]} />
      <Separator $space={18} />
      <RibbonItem width={98} menu icon={<ChartTypeIcon />} label={["Change", "Chart Type"]} />
    </Ribbon>
    <Editor>
      <RulerCorner />
      <HorizontalRuler>
        <svg width="100%" height="28">
          <RulerMarks half={16} start={54} end={1533} center={795} />
        </svg>
      </HorizontalRuler>
      <VerticalRuler>
        <svg width="28" height="100%">
          <RulerMarks half={9} start={175} end={1006} center={591} vertical />
        </svg>
      </VerticalRuler>
      <Stage>
        <Slide>
          <SlopeChart />
        </Slide>
      </Stage>
      <NotesBox placeholder="Click to add notes" aria-label="Notes" />
    </Editor>
    <StatusBar $right={41}>
      <StatusText $space={36}>Slide 2 of 4</StatusText>
      <StatusText>English (United States)</StatusText>
      <Spacer />
      <StatusButton $space={36}>
        <Icon w={23} h={24} stroke="#5c5c5c">
          <path d="M0 11h23M0 17h23M0 23h12" />
          <path d="M6 6.500 11.500 0 17 6.500z" fill="#5c5c5c" stroke="none" />
        </Icon>
        Notes
      </StatusButton>
      <StatusButton $space={19}>
        <Icon w={23} h={22} stroke="none" fill="#5c5c5c">
          <path d="M2 0h19q2 0 2 2v12q0 2-2 2H11l-5 6v-6H2q-2 0-2-2V2q0-2 2-2z" />
        </Icon>
        Comments
      </StatusButton>
      <ViewButton $active aria-label="Normal view">
        <Icon w={24} h={24} stroke="none" fill="#fff">
          <rect width="24" height="24" rx="2" />
          <path d="M7 3h15v12H7zM7 17h15v3H7z" fill="#a5a5a5" />
          <rect x="11" y="6" width="8" height="5" />
        </Icon>
      </ViewButton>
      <ViewButton aria-label="Slide sorter">
        <Icon w={27} h={20} stroke="none" fill="currentColor">
          <rect width="11" height="8" rx="1" />
          <rect x="16" width="11" height="8" rx="1" />
          <rect y="12" width="11" height="8" rx="1" />
          <rect x="16" y="12" width="11" height="8" rx="1" />
        </Icon>
      </ViewButton>
      <ViewButton aria-label="Reading view">
        <Icon w={26} h={22} sw={1.800}>
          <path d="M13 3C10 1 5 1 1 1v18c4 0 9 0 12 2 3-2 8-2 12-2V1c-4 0-9 0-12 2zv18" />
          <path d="M4 6h6M4 10h6M4 14h6M16 6h6M16 10h6M16 14h6" />
        </Icon>
      </ViewButton>
      <ViewButton aria-label="Slide show">
        <Icon w={26} h={22} sw={1.800}>
          <path d="M0 2h26" strokeWidth="3.500" />
          <path d="M3 3v12h20V3M8 9h10M13 15v6M8 21h10" />
        </Icon>
      </ViewButton>
      <Zoom value={44} label="89%" after={32} space={37} />
      <StatusButton aria-label="Fit slide">
        <Icon w={23} h={23} sw={1.800}>
          <rect x="1" y="1" width="21" height="21" rx="1" />
          <path d="M11.500 4v5M11.500 14v5M4 11.500h5M14 11.500h5M9 6l2.500-2.500L14 6M9 17l2.500 2.500L14 17M6 9l-2.500 2.500L6 14M17 9l2.500 2.500L17 14" strokeWidth="1.500" />
        </Icon>
      </StatusButton>
    </StatusBar>
  </AppWindow>
);

const columns = ["A", "B", "C", "D", "E", "F", "G"];
const data = [
  ["Column1", "Series 1", "Series 2", "Series 3"],
  ["Category 1", 4.3, 2.4, 2],
  ["Category 2", 2.5, 4.4, 2],
];
const rows = Array.from({ length: 41 }, (_, i) => i + 1);

const Workbook = () => (
  <AppWindow $grow={868}>
    <TitleBar $color="#3a7b49" $columns="auto 1fr auto">
      <Tools>
        <AutoSaveToggle color="#2a4d35" />
        <ToolButton aria-label="Home">
          <HomeIcon />
        </ToolButton>
        <ToolButton $dim aria-label="Save">
          <SaveIcon />
        </ToolButton>
        <ToolButton aria-label="Save as">
          <SaveEditIcon />
        </ToolButton>
        <UndoGroup />
        <SpellButton aria-label="Spelling">
          ABC
          <CheckMark />
        </SpellButton>
        <ToolButton aria-label="More">
          <MoreIcon />
        </ToolButton>
        <DocTitle $size={22}>Chart in Mic...</DocTitle>
      </Tools>
      <i />
      <TitleEnd />
    </TitleBar>
    <TabRow>
      <Tabs $gap={44}>
        <Tab $active $color="#1c1c1c">
          Home
        </Tab>
        <Tab $color="#1c1c1c">Insert</Tab>
        <Tab $color="#1c1c1c">Draw</Tab>
        <TabTail>
          <OverflowIcon />
          <Tab $color="#1c1c1c">
            <BulbIcon />
            Tell me
          </Tab>
        </TabTail>
      </Tabs>
      <ShareButtons color="#2f6b41" />
    </TabRow>
    <Ribbon $pad={0}>
      <RibbonItem width={127} color="#111" menu icon={<ClipboardIcon />} label={["Clipboard"]} />
      <Separator />
      <RibbonItem
        width={119}
        color="#111"
        menu
        icon={<ThinGlyph $size={66}>A</ThinGlyph>}
        label={["Font"]}
      />
      <Separator />
      <RibbonItem width={131} color="#111" menu icon={<AlignIcon />} label={["Alignment"]} />
      <Separator />
      <RibbonItem
        width={119}
        color="#111"
        menu
        icon={<ThinGlyph $size={56}>%</ThinGlyph>}
        label={["Number"]}
      />
      <Separator />
      <FormatList>
        <FormatButton>
          <ConditionalIcon />
          Conditional Formatting
          <Chevron />
        </FormatButton>
        <FormatButton>
          <TableStyleIcon />
          Format as Table
          <Chevron />
        </FormatButton>
        <FormatButton>
          <TableStyleIcon full />
          Cell Styles
          <Chevron />
        </FormatButton>
      </FormatList>
      <Separator />
      <CutGroup>
        <CutTableIcon />
      </CutGroup>
      <RibbonScroll aria-label="Scroll ribbon">
        <Triangle w={9} h={12} d="M0 0l9 6-9 6z" />
      </RibbonScroll>
    </Ribbon>
    <FormulaBar>
      <NameBox>
        <input defaultValue="C10" aria-label="Name box" />
        <Stepper>
          <button aria-label="Previous">
            <Triangle d="M0 10 6 0l6 10z" />
          </button>
          <button aria-label="Next">
            <Triangle d="M0 0h12L6 10z" />
          </button>
        </Stepper>
      </NameBox>
      <FormulaTools>
        <button aria-label="Cancel">
          <Icon w={20} h={20} sw={4}>
            <path d="m1 1 18 18M19 1 1 19" />
          </Icon>
        </button>
        <button aria-label="Enter">
          <Icon w={24} h={20} sw={4}>
            <path d="m1 11 7 7L23 1" />
          </Icon>
        </button>
        <FunctionButton>fx</FunctionButton>
      </FormulaTools>
      <FormulaInput aria-label="Formula" />
      <RibbonScroll aria-label="Expand formula bar">
        <Triangle w={11} h={9} d="M0 0h11L5.500 9z" />
      </RibbonScroll>
    </FormulaBar>
    <SheetArea>
      <Sheet>
        <thead>
          <Row $height={38}>
            <CornerHead>
              <Icon w={26} h={26} stroke="none" fill="#dcdcdc">
                <path d="M26 0v26H0z" />
              </Icon>
            </CornerHead>
            {columns.map((c) => (
              <ColumnHead key={c} $active={c === "C"}>
                {c}
              </ColumnHead>
            ))}
            <ColumnHead />
          </Row>
        </thead>
        <tbody>
          {rows.map((n) => (
            <Row key={n}>
              <RowHead $active={n === 10}>{n}</RowHead>
              {[...columns, "H"].map((c, i) => {
                const value = data[n - 1]?.[i];
                return (
                  <Cell
                    key={c}
                    $number={typeof value === "number"}
                    $blueRight={n <= 3 && c === "D"}
                    $blueBottom={n === 3 && i < 4}
                  >
                    {value}
                    {n === 3 && c === "D" && <RangeHandle />}
                    {n === 10 && c === "C" && <Selection />}
                  </Cell>
                );
              })}
            </Row>
          ))}
          <Row $height={3}>
            <RowHead as="td" />
            {[...columns, "H"].map((c) => (
              <Cell key={c} />
            ))}
          </Row>
        </tbody>
      </Sheet>
    </SheetArea>
    <SheetTabs>
      <SheetNav aria-label="Previous sheet">
        <Triangle h={18} d="M12 0v18L0 9z" />
      </SheetNav>
      <SheetNav aria-label="Next sheet">
        <Triangle h={18} d="M0 0l12 9-12 9z" />
      </SheetNav>
      <SheetTab>Sheet1</SheetTab>
      <AddSheet aria-label="Add sheet">
        <Icon w={18} h={18} sw={3}>
          <path d="M0 9h18M9 0v18" />
        </Icon>
      </AddSheet>
    </SheetTabs>
    <StatusBar $right={43}>
      <StatusText $space={36}>Ready</StatusText>
      <StatusButton aria-label="Record macro">
        <Icon w={26} h={24}>
          <circle cx="5" cy="4" r="4" fill="currentColor" stroke="none" />
          <path d="M11 2h10c4 0 4 3 4 4h-5v13c0 3-3 4-5 4H4c-3 0-4-2-4-4h13c0 3 2 4 3 4M6 19V9" />
        </Icon>
      </StatusButton>
      <Spacer />
      <ViewButton $active aria-label="Normal">
        <Icon w={23} h={23} stroke="none" fill="#fff">
          <rect width="23" height="23" rx="2" />
          <path d="M2 2h5v5H2zM9 2h5v5H9zM16 2h5v5h-5zM2 9h5v5H2zM9 9h5v5H9zM16 9h5v5h-5zM2 16h5v5H2zM9 16h5v5H9zM16 16h5v5h-5z" fill="#a5a5a5" />
        </Icon>
      </ViewButton>
      <ViewButton aria-label="Page layout">
        <Icon w={24} h={22}>
          <path d="M1 1h22v20H1zM6 4h12v14H6zM9 8h6M9 11h6M9 14h6" />
        </Icon>
      </ViewButton>
      <ViewButton aria-label="Page break preview">
        <Icon w={24} h={22}>
          <path d="M1 1h22v20H1zM1 13h14V1M8 1v12" />
        </Icon>
      </ViewButton>
      <Zoom value={50} label="100%" after={28} />
    </StatusBar>
  </AppWindow>
);

const App = () => (
  <>
    <GlobalStyle />
    <Desktop>
      <Slides />
      <Divider />
      <Workbook />
    </Desktop>
  </>
);

export default App;
